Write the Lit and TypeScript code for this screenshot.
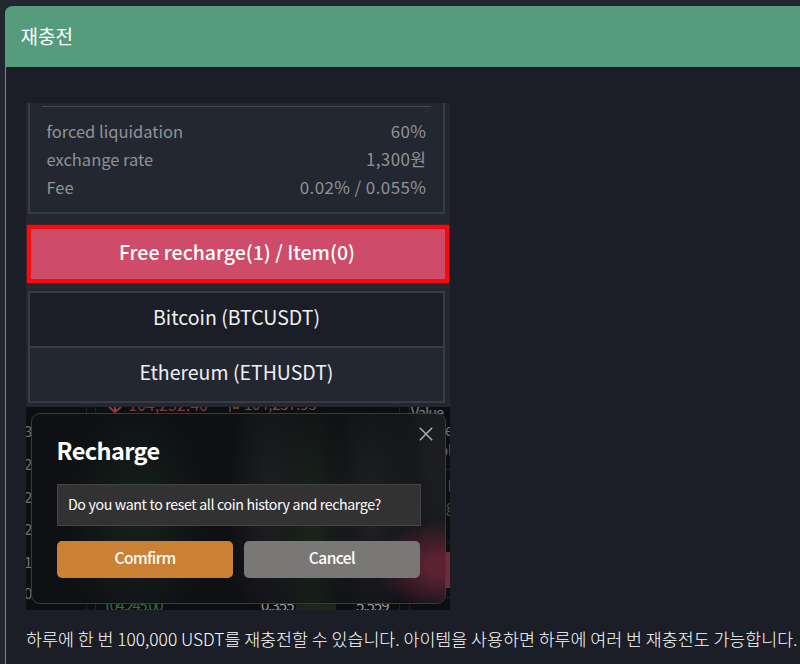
import { LitElement, html, css } from "lit";
import { customElement } from "lit/decorators.js";

const fees = [
  ["forced liquidation", "60%"],
  ["exchange rate", "1,300원"],
  ["Fee", "0.02% / 0.055%"],
];

@customElement("account-summary")
class AccountSummary extends LitElement {
  static styles = css`
    :host { display: block; box-sizing: border-box; width: 424px; height: 304px; background: #232731; overflow: hidden; }
    .fees { box-sizing: border-box; margin: 0 5px 0 2px; height: 111px; border: 2px solid #3a3b3e; border-top: 0; padding: 3px 12px 0; }
    .rule { height: 1px; background: #4b4846; margin-bottom: 10px; }
    .row { display: flex; justify-content: space-between; height: 28px; line-height: 28px; padding: 0 5px 0 4.5px; font-size: 16.5px; color: #919294; }
    .row span + span { font-size: 17px; letter-spacing: 0.4px; margin-right: -0.4px; }
    .recharge { box-sizing: border-box; height: 58px; width: 422px; margin: 11px 0 0 1px; border: 4px solid #f60a0c; box-shadow: 0 0 0 0.5px #8c161d; background: #ce4b69; color: #fff; font-weight: 500; font-size: 19.5px; line-height: 46px; text-align: center; text-indent: -2px; }
    .coins { box-sizing: border-box; margin: 8px 5px 0 2px; height: 112px; border: 2px solid #3a3b3e; color: #f0f0f1; font-size: 19.5px; text-align: center; }
    .coin { box-sizing: border-box; height: 53px; line-height: 47px; background: #1b1e27; }
    .coin + .coin { height: 55px; background: #232731; border-top: 2px solid #3a3b3e; }
  `;
  render() {
    return html`
      <div class="fees">
        <div class="rule"></div>
        ${fees.map(([k, v]) => html`<div class="row"><span>${k}</span><span>${v}</span></div>`)}
      </div>
      <div class="recharge">Free recharge(1) / Item(0)</div>
      <div class="coins">
        <div class="coin">Bitcoin (BTCUSDT)</div>
        <div class="coin">Ethereum (ETHUSDT)</div>
      </div>
    `;
  }
}

@customElement("recharge-dialog")
class RechargeDialog extends LitElement {
  static styles = css`
    :host { display: block; position: relative; width: 424px; height: 203px; background: #0d0e12; overflow: hidden; }
    .under { position: absolute; white-space: nowrap; line-height: 20px; font-size: 15px; color: #6c6e72; }
    .bid { left: 102px; top: -13px; font-size: 16px; color: #8a3532; }
    .arrow { position: absolute; left: 82px; top: 0; }
    .flag { position: absolute; left: 203px; top: 0; }
    .mark { left: 218px; top: -13px; color: #80502a; font-size: 14.5px; }
    .value { left: 385px; top: -5px; font-size: 14px; letter-spacing: -0.7px; color: #85868a; }
    .low { left: 77px; top: 188px; color: #307136; letter-spacing: -1.6px; }
    .q1 { left: 235px; top: 188px; color: #9b9c9e; letter-spacing: -1px; }
    .q2 { left: 330px; top: 188px; color: #9b9c9e; letter-spacing: -1px; }
    .axis { left: -2px; }
    .a1 { top: 14px; } .a2 { top: 47px; } .a3 { top: 80px; }
    .a4 { top: 112px; } .a5 { top: 145px; } .a6 { top: 176px; }
    .edge { left: 419px; }
    .e1 { top: 13px; } .e2 { left: 413px; top: 33px; } .e3 { left: 422px; top: 69px; } .e4 { left: 411px; top: 89px; color: #4b4c50; }
    .line { position: absolute; width: 1px; top: 0; bottom: 0; background: #202126; }
    .l1 { left: 60px; } .l2 { left: 69px; } .l3 { left: 373px; } .l4 { left: 383px; }
    .sep { position: absolute; left: 420px; width: 4px; height: 1px; background: #25262b; }
    .s1 { top: 62px; } .s2 { top: 135px; } .s3 { top: 190px; }
    .bar { position: absolute; left: 270px; top: 190px; width: 40px; height: 13px; background: #192618; }
    .sell { position: absolute; left: 380px; top: 145px; width: 44px; height: 36px; background: #702b3d; }
    .dialog {
      position: absolute; left: 5px; top: 6px; box-sizing: border-box; width: 415px; height: 191px;
      border: 1px solid #343b46; border-radius: 9px; padding: 0 25px;
      background:
        radial-gradient(ellipse 66px 46px at 408px 152px, #5b2232 20%, #5b223200 100%),
        radial-gradient(ellipse 70px 120px at 105px 105px, #15221a 0%, #15221a00 100%),
        radial-gradient(ellipse 38px 150px at 280px 115px, #19231a 15%, #19231a00 100%),
        radial-gradient(ellipse 45px 150px at 240px 90px, #1c1e20 10%, #1c1e2000 100%),
        radial-gradient(ellipse 45px 150px at 340px 95px, #1e1f23 10%, #1e1f2300 100%),
        radial-gradient(ellipse 60px 170px at 410px 50px, #1c1d21 20%, #1c1d2100 100%),
        #0f1014;
      background-clip: padding-box;
      color: #fff;
    }
    .close { position: absolute; left: 387px; top: 13px; }
    h2 { margin: 18px 0 0; height: 36px; line-height: 36px; font-size: 23.5px; letter-spacing: -0.6px; text-indent: -0.5px; font-weight: 700; }
    .question { box-sizing: border-box; margin-top: 16px; height: 42px; width: 364px; border: 1px solid #464646; background: #323232; padding-left: 10px; line-height: 38px; font-size: 14.2px; letter-spacing: -0.4px; word-spacing: 0.2px; white-space: nowrap; }
    .actions { display: flex; gap: 11px; margin-top: 15px; }
    .button { width: 176px; height: 37px; border-radius: 5px; background: #cb8135; text-align: center; line-height: 33px; font-size: 15.6px; letter-spacing: -0.6px; font-weight: 500; }
    .cancel { background: #797876; }
  `;
  render() {
    return html`
      <i class="line l1"></i><i class="line l2"></i><i class="line l3"></i><i class="line l4"></i>
      <i class="sep s1"></i><i class="sep s2"></i><i class="sep s3"></i>
      <svg class="arrow" width="14" height="7" viewBox="0 0 14 7" fill="none" stroke="#983733" stroke-width="2"><path d="M7-4V4M1 0L7 5L13 0" /></svg>
      <svg class="flag" width="12" height="6" viewBox="0 0 12 6" fill="none" stroke="#80502a" stroke-width="1.3"><path d="M1 0V5M4 1H10" /></svg>
      <span class="under bid">104,252.40</span>
      <span class="under mark">104,257.95</span>
      <span class="under value">Value</span>
      ${["3", "2", "2", "2", "1", "0"].map((n, i) => html`<span class="under axis a${i + 1}">${n}</span>`)}
      <span class="under edge e1">e</span>
      <span class="under edge e2">ol</span>
      <span class="under edge e3">l</span>
      <span class="under edge e4">ug</span>
      <div class="sell"></div>
      <div class="bar"></div>
      <span class="under low">104,245.00</span>
      <span class="under q1">0.355</span>
      <span class="under q2">5.559</span>
      <div class="dialog">
        <svg class="close" width="14" height="14" viewBox="0 0 14 14" stroke="#b2b3b4" stroke-width="1.4"><path d="M.8.8L13.2 13.2M13.2.8L.8 13.2" /></svg>
        <h2>Recharge</h2>
        <div class="question">Do you want to reset all coin history and recharge?</div>
        <div class="actions">
          <div class="button">Comfirm</div>
          <div class="button cancel">Cancel</div>
        </div>
      </div>
    `;
  }
}

@customElement("app-root")
class AppRoot extends LitElement {
  static styles = css`
    :host { display: block; box-sizing: border-box; height: 664px; padding: 6px 0 0 5px; overflow: hidden; background: #222630; color: #fff; font-family: "Noto Sans CJK KR", sans-serif; }
    .panel { box-sizing: border-box; height: 658px; border-left: 1px solid #559c7c; border-radius: 8px 0 0 0; background: #1b1e26; }
    header { box-sizing: border-box; height: 61px; margin-left: -1px; padding-left: 15.5px; background: #559c7c; border-radius: 8px 0 0 0; line-height: 60px; font-size: 19px; }
    .body { padding: 36px 0 0 20px; }
    p { margin: 15px 0 0; line-height: 28px; font-size: 17.33px; font-weight: 300; white-space: nowrap; }
  `;
  render() {
    return html`
      <div class="panel">
        <header>재충전</header>
        <div class="body">
          <account-summary></account-summary>
          <recharge-dialog></recharge-dialog>
          <p>하루에 한 번 100,000 USDT를 재충전할 수 있습니다. 아이템을 사용하면 하루에 여러 번 재충전도 가능합니다.</p>
        </div>
      </div>
    `;
  }
}
